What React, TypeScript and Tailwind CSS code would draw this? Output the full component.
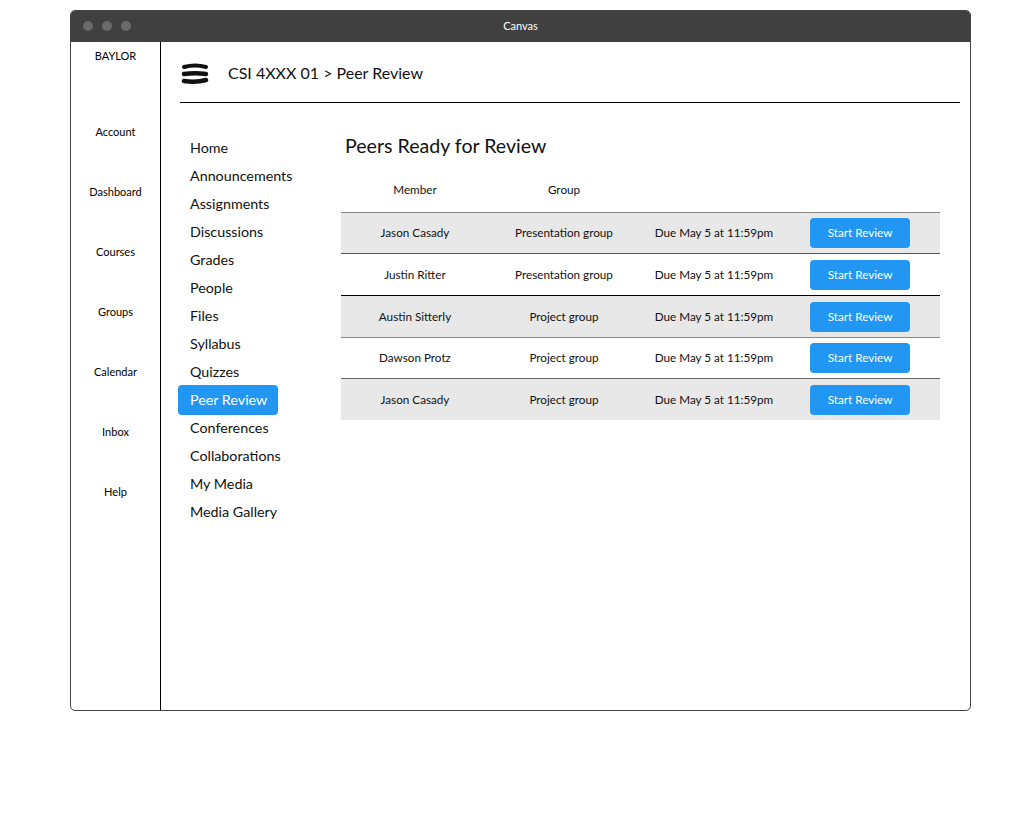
const sideLinks = ["Account", "Dashboard", "Courses", "Groups", "Calendar", "Inbox", "Help"];

const courseNav = [
  "Home",
  "Announcements",
  "Assignments",
  "Discussions",
  "Grades",
  "People",
  "Files",
  "Syllabus",
  "Quizzes",
  "Peer Review",
  "Conferences",
  "Collaborations",
  "My Media",
  "Media Gallery",
];

const peers = [
  { name: "Jason Casady", group: "Presentation group", row: "h-[41px] bg-[#e8e8e8] border-[#8a8a8a]" },
  { name: "Justin Ritter", group: "Presentation group", row: "h-[42px] bg-white border-[#555]" },
  { name: "Austin Sitterly", group: "Project group", row: "h-[42px] bg-[#e8e8e8] border-black" },
  { name: "Dawson Protz", group: "Project group", row: "h-[41px] bg-white border-[#8a8a8a]" },
  { name: "Jason Casady", group: "Project group", row: "h-[42px] bg-[#e8e8e8] border-[#666]" },
];

function MenuIcon() {
  return (
    <svg width="28" height="22" viewBox="0 0 28 22">
      <path d="M3 4 C10 2, 18 2, 25 4" stroke="#111" strokeWidth="4" strokeLinecap="round" fill="none" />
      <path d="M3 11 C10 10, 18 10, 25 11" stroke="#111" strokeWidth="4.5" strokeLinecap="round" fill="none" />
      <path d="M3 18 C10 19, 18 19, 25 17" stroke="#111" strokeWidth="4.5" strokeLinecap="round" fill="none" />
    </svg>
  );
}

export default function App() {
  return (
    <div className="w-[1020px] h-[820px] bg-white pt-[10px] pl-[70px]" style={{ fontFamily: "'Source Sans Pro', 'Lato', 'Liberation Sans', sans-serif" }}>
      <div className="w-[901px] h-[701px] flex flex-col rounded-[5px] border border-[#444] overflow-hidden">
        {/* title bar */}
        <div className="h-[31px] bg-[#404040] flex items-center relative shrink-0 pb-[2px]">
          <div className="flex gap-[9px] pl-[12px]">
            <span className="w-[10px] h-[10px] rounded-full bg-[#6a6a6a]" />
            <span className="w-[10px] h-[10px] rounded-full bg-[#6a6a6a]" />
            <span className="w-[10px] h-[10px] rounded-full bg-[#6a6a6a]" />
          </div>
          <div className="absolute inset-0 pb-[1px] flex items-center justify-center text-white text-[11px]">Canvas</div>
        </div>

        <div className="flex flex-1 min-h-0">
          {/* global nav */}
          <div className="w-[90px] border-r border-black flex flex-col items-center text-[11px] text-black">
            <div className="mt-[6px] h-[16px] leading-[16px]">BAYLOR</div>
            <div className="mt-[60px] flex flex-col items-center gap-[44px]">
              {sideLinks.map((l) => (
                <div key={l} className="h-[16px] leading-[16px]">{l}</div>
              ))}
            </div>
          </div>

          {/* main */}
          <div className="flex-1 pl-[19px] pr-[10px]">
            <div className="h-[61px] flex items-center border-b border-black">
              <div className="pl-[1px] pt-[3px]"><MenuIcon /></div>
              <div className="ml-[19px] text-[16px] text-[#111] pt-[2px]">CSI 4XXX 01 &gt; Peer Review</div>
            </div>

            <div className="flex mt-[31px]">
              <div className="w-[161px] flex flex-col">
                {courseNav.map((n) => (
                  <div
                    key={n}
                    className={
                      n === "Peer Review"
                        ? "-ml-[2px] pl-[12px] w-[100px] -my-[1px] h-[30px] leading-[30px] bg-[#2196f3] text-white rounded-[4px] text-[14.3px]"
                        : "h-[28px] leading-[28px] pl-[10px] text-[14.3px] text-[#111]"
                    }
                  >
                    {n}
                  </div>
                ))}
              </div>

              <div className="w-[599px]">
                <div className="pl-[4px] -mt-[3px] text-[19.6px] text-[#111] leading-[30px]">Peers Ready for Review</div>
                <div className="grid grid-cols-[148px_150px_150px_151px] text-[11.7px] text-[#111] mt-[7px] h-[44px] items-center">
                  <div className="text-center">Member</div>
                  <div className="text-center">Group</div>
                  <div />
                  <div />
                </div>
                {peers.map((p, i) => (
                  <div
                    key={i}
                    className={"grid grid-cols-[148px_150px_150px_151px] items-center text-[11.7px] text-[#111] border-t " + p.row}
                  >
                    <div className="text-center">{p.name}</div>
                    <div className="text-center">{p.group}</div>
                    <div className="text-center">Due May 5 at 11:59pm</div>
                    <div className="pl-[21px]">
                      <button className="w-[100px] h-[30px] bg-[#2196f3] text-white text-[11.7px] rounded-[4px]">Start Review</button>
                    </div>
                  </div>
                ))}
              </div>
            </div>
          </div>
        </div>
      </div>
    </div>
  );
}
